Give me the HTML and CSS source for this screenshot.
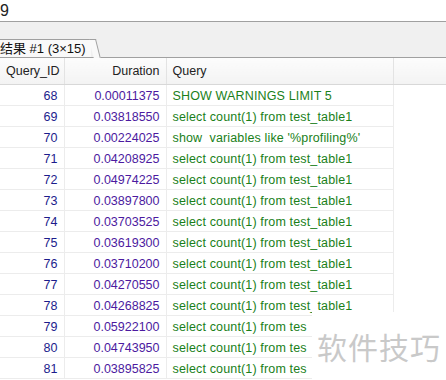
FILE: index.html
```html
<!DOCTYPE html>
<html lang="zh">
<head>
  <meta charset="UTF-8" />
  <title>结果 #1</title>
  <link rel="stylesheet" href="styles.css">
</head>
<body>
  <div class="editor">
    <span class="resto">9</span>
  </div>

  <div class="pestanas">
    <div class="pestana">结果 #1 (3×15)</div>
  </div>

  <div class="rejilla">
    <table class="tabla">
      <colgroup>
        <col class="c-id">
        <col class="c-dur">
        <col class="c-query">
        <col>
      </colgroup>
      <thead>
        <tr>
          <th class="num">Query_ID</th>
          <th class="num">Duration</th>
          <th>Query</th>
          <th class="vacio"></th>
        </tr>
      </thead>
      <tbody>
        <tr><td class="id">68</td><td class="dur">0.00011375</td><td class="sql">SHOW WARNINGS LIMIT 5</td><td class="vacio"></td></tr>
        <tr><td class="id">69</td><td class="dur">0.03818550</td><td class="sql">select count(1) from test_table1</td><td class="vacio"></td></tr>
        <tr><td class="id">70</td><td class="dur">0.00224025</td><td class="sql">show&nbsp; variables like '%profiling%'</td><td class="vacio"></td></tr>
        <tr><td class="id">71</td><td class="dur">0.04208925</td><td class="sql">select count(1) from test_table1</td><td class="vacio"></td></tr>
        <tr><td class="id">72</td><td class="dur">0.04974225</td><td class="sql">select count(1) from test_table1</td><td class="vacio"></td></tr>
        <tr><td class="id">73</td><td class="dur">0.03897800</td><td class="sql">select count(1) from test_table1</td><td class="vacio"></td></tr>
        <tr><td class="id">74</td><td class="dur">0.03703525</td><td class="sql">select count(1) from test_table1</td><td class="vacio"></td></tr>
        <tr><td class="id">75</td><td class="dur">0.03619300</td><td class="sql">select count(1) from test_table1</td><td class="vacio"></td></tr>
        <tr><td class="id">76</td><td class="dur">0.03710200</td><td class="sql">select count(1) from test_table1</td><td class="vacio"></td></tr>
        <tr><td class="id">77</td><td class="dur">0.04270550</td><td class="sql">select count(1) from test_table1</td><td class="vacio"></td></tr>
        <tr><td class="id">78</td><td class="dur">0.04268825</td><td class="sql">select count(1) from test_table1</td><td class="vacio"></td></tr>
        <tr><td class="id">79</td><td class="dur">0.05922100</td><td class="sql">select count(1) from tes</td><td class="vacio"></td></tr>
        <tr><td class="id">80</td><td class="dur">0.04743950</td><td class="sql">select count(1) from tes</td><td class="vacio"></td></tr>
        <tr><td class="id">81</td><td class="dur">0.03895825</td><td class="sql">select count(1) from tes</td><td class="vacio"></td></tr>
      </tbody>
    </table>
  </div>

  <div class="marca">软件技巧</div>
</body>
</html>
```

FILE: styles.css
```css
html, body {
  margin: 0;
  padding: 0;
  width: 446px;
  height: 380px;
  overflow: hidden;
  background: #fff;
  font-family: "Liberation Sans", "Noto Sans CJK SC", sans-serif;
  position: relative;
}

.editor {
  height: 21px;
  border-bottom: 1px solid #a0a0a0;
  background: #fff;
  overflow: hidden;
}

.resto {
  display: inline-block;
  margin-top: 2px;
  font-size: 16px;
  line-height: 18px;
  color: #222;
}

.pestanas {
  height: 35px;
  background: #f0f0f0;
  border-bottom: 1px solid #a0a0a0;
  display: flex;
  align-items: flex-end;
}

.pestana {
  position: relative;
  height: 17px;
  width: 91px;
  background: #f9f9f9;
  border-top: 1px solid #a0a0a0;
  font-size: 13px;
  line-height: 17px;
  color: #111;
  white-space: nowrap;
}

/* borde inclinado de la pestaña */
.pestana::after {
  content: "";
  position: absolute;
  top: -1px;
  right: -5px;
  width: 6px;
  height: 18px;
  background: #f9f9f9;
  border-right: 1px solid #a0a0a0;
  border-top: 1px solid #a0a0a0;
  transform: skewX(14deg);
  transform-origin: top left;
}

.tabla {
  border-collapse: collapse;
  table-layout: fixed;
  width: 446px;
  font-size: 12.5px;
}

.c-id { width: 64px; }
.c-dur { width: 102px; }
.c-query { width: 227px; }

.tabla th {
  height: 26px;
  padding: 0 6px;
  font-weight: normal;
  color: #222;
  text-align: left;
  background: linear-gradient(#fcfcfc, #f3f3f3);
  border-right: 1px solid #e3e3e3;
  border-bottom: 1px solid #d8d8d8;
}

.tabla th.num { text-align: right; }

.tabla td {
  height: 21px;
  padding: 2px 6px 0;
  box-sizing: border-box;
  white-space: nowrap;
  overflow: hidden;
  border-right: 1px solid #ececec;
  border-bottom: 1px solid #ececec;
}

.tabla td.vacio {
  border-bottom: none;
  border-right: none;
}

.tabla th.vacio { border-right: none; }

.id {
  text-align: right;
  color: #1c1c8c;
}

.dur {
  text-align: right;
  color: #4c1aa0;
}

.sql {
  color: #1a7f1a;
  letter-spacing: 0.15px;
}

.marca {
  position: absolute;
  left: 312px;
  top: 312px;
  width: 134px;
  height: 68px;
  background: #fff;
  color: #c9c9c9;
  font-family: "Noto Sans CJK SC", sans-serif;
  font-size: 30px;
  line-height: 30px;
  padding-top: 19px;
  padding-left: 5px;
  box-sizing: border-box;
  letter-spacing: 1px;
}
```
